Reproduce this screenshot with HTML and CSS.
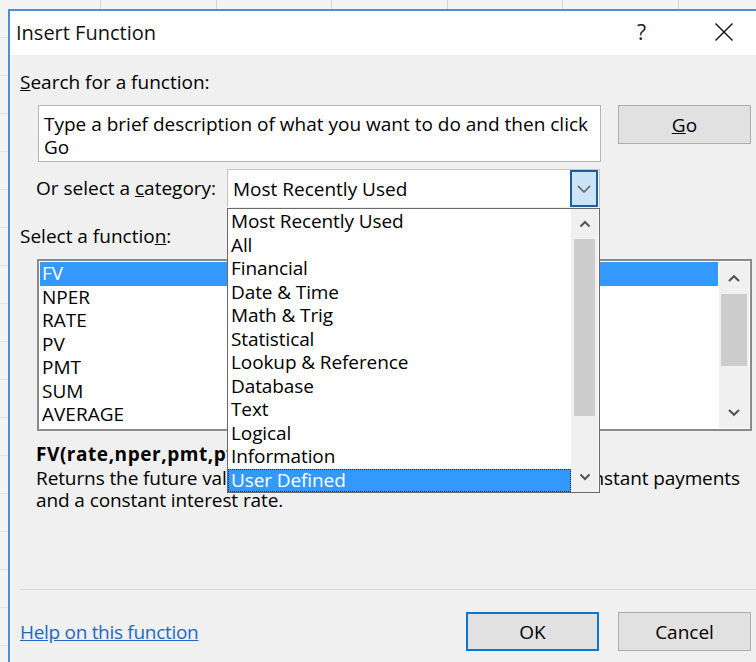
FILE: index.html
```html
<!DOCTYPE html>
<html lang="en">
<head>
<meta charset="utf-8">
<title>Insert Function</title>
<link rel="stylesheet" href="styles.css">
</head>
<body>
<div class="sheet-strip">
  <span class="cell"></span><span class="cell"></span><span class="cell"></span><span class="cell"></span><span class="cell"></span><span class="cell"></span>
</div>
<div class="dialog">
  <div class="titlebar">
    <span class="title">Insert Function</span>
    <span class="help-btn">?</span>
    <span class="close-btn">
      <svg width="20" height="20" viewBox="0 0 20 20"><path d="M1.5 1.5 L18.5 18.5 M18.5 1.5 L1.5 18.5" stroke="#1a1a1a" stroke-width="1.5" fill="none"/></svg>
    </span>
  </div>

  <div class="content">
    <div class="label search-label"><u>S</u>earch for a function:</div>
    <div class="search-row">
      <div class="search-box">Type a brief description of what you want to do and then click Go</div>
      <button class="btn go-btn"><u>G</u>o</button>
    </div>

    <div class="category-row">
      <div class="label category-label">Or select a <u>c</u>ategory:</div>
      <div class="combo">
        <span class="combo-value">Most Recently Used</span>
        <span class="combo-btn">
          <svg width="14" height="8" viewBox="0 0 14 8"><path d="M1 1 L7 7 L13 1" stroke="#5a5a5a" stroke-width="1.5" fill="none"/></svg>
        </span>
        <div class="dropdown">
          <ul class="dropdown-items">
            <li>Most Recently Used</li>
            <li>All</li>
            <li>Financial</li>
            <li>Date &amp; Time</li>
            <li>Math &amp; Trig</li>
            <li>Statistical</li>
            <li>Lookup &amp; Reference</li>
            <li>Database</li>
            <li>Text</li>
            <li>Logical</li>
            <li>Information</li>
            <li class="selected">User Defined</li>
          </ul>
          <div class="scrollbar dd-scroll">
            <span class="arrow">
              <svg width="12" height="8" viewBox="0 0 12 8"><path d="M1.5 6.5 L6 2 L10.5 6.5" stroke="#555" stroke-width="2" fill="none"/></svg>
            </span>
            <span class="thumb dd-thumb"></span>
            <span class="track"></span>
            <span class="arrow">
              <svg width="12" height="8" viewBox="0 0 12 8"><path d="M1.5 1.5 L6 6 L10.5 1.5" stroke="#555" stroke-width="2" fill="none"/></svg>
            </span>
          </div>
        </div>
      </div>
    </div>

    <div class="label function-label">Select a functio<u>n</u>:</div>
    <div class="listbox">
      <ul class="fn-items">
        <li class="selected">FV</li>
        <li>NPER</li>
        <li>RATE</li>
        <li>PV</li>
        <li>PMT</li>
        <li>SUM</li>
        <li>AVERAGE</li>
      </ul>
      <div class="scrollbar fn-scroll">
        <span class="arrow">
          <svg width="14" height="9" viewBox="0 0 14 9"><path d="M2 7 L7 2.2 L12 7" stroke="#555" stroke-width="2.2" fill="none"/></svg>
        </span>
        <span class="thumb fn-thumb"></span>
        <span class="track"></span>
        <span class="arrow">
          <svg width="14" height="9" viewBox="0 0 14 9"><path d="M2 2 L7 6.8 L12 2" stroke="#555" stroke-width="2.2" fill="none"/></svg>
        </span>
      </div>
    </div>

    <div class="signature">FV(rate,nper,pmt,pv,type)</div>
    <div class="description">Returns the future value of an investment based on periodic, constant payments and a constant interest rate.</div>

    <div class="separator"></div>

    <div class="footer">
      <a class="help-link" href="#">Help on this function</a>
      <button class="btn ok-btn">OK</button>
      <button class="btn cancel-btn">Cancel</button>
    </div>
  </div>
</div>
</body>
</html>
```

FILE: styles.css
```css
html, body {
  margin: 0;
  padding: 0;
}

body {
  width: 756px;
  height: 662px;
  overflow: hidden;
  background-color: #f4f4f4;
  /* worksheet row lines peeking out at the left edge */
  background-image: repeating-linear-gradient(to bottom, transparent 0, transparent 37px, #e2e2e2 37px, #e2e2e2 38px);
  font-family: "Open Sans", "Noto Sans", sans-serif;
  font-size: 19px;
  color: #000;
}

/* column headers of the worksheet behind the dialog */
.sheet-strip {
  display: flex;
  height: 9px;
  padding-left: 100px;
  background: #f4f4f4;
  overflow: hidden;
}

.sheet-strip .cell {
  flex: 0 0 115.6px;
  border-left: 1px solid #d6d6d6;
  box-sizing: border-box;
}

.dialog {
  margin-left: 8px;
  width: 748px;
  height: 653px;
  border-top: 2px solid #4b8fd6;
  border-left: 2px solid #4b8fd6;
  background: #f0f0f0;
  box-sizing: border-box;
}

.titlebar {
  display: flex;
  align-items: center;
  height: 44px;
  background: #fff;
  padding-left: 6px;
}

.title {
  font-size: 20px;
  flex: 1;
  color: #111;
  margin-top: -2px;
}

.help-btn {
  font-size: 21px;
  color: #222;
  margin-right: 68px;
  margin-top: -2px;
}

.close-btn {
  display: flex;
  margin-right: 22px;
  margin-top: -2px;
}

.content {
  padding: 0 5px 0 10px;
  position: relative;
}

.label {
  line-height: 24px;
  white-space: nowrap;
}

.search-label {
  margin-top: 15px;
}

.search-row {
  display: flex;
  align-items: flex-start;
  margin-top: 11px;
}

.search-box {
  margin-left: 18px;
  width: 563px;
  height: 57px;
  box-sizing: border-box;
  border: 1px solid #b4b4b4;
  background: #fff;
  padding: 7px 10px 0 5px;
  line-height: 23px;
}

.btn {
  font-family: inherit;
  font-size: 19px;
  color: #000;
  width: 133px;
  height: 39px;
  background: #e1e1e1;
  border: 1px solid #adadad;
  padding: 0;
  box-sizing: border-box;
}

.go-btn {
  margin-left: 17px;
}

.category-row {
  display: flex;
  align-items: center;
  margin-top: 7px;
}

.category-label {
  margin-left: 16px;
  width: 191px;
}

.combo {
  position: relative;
  display: flex;
  align-items: center;
  width: 373px;
  height: 38px;
  box-sizing: border-box;
  border: 1px solid #c4c4c4;
  border-bottom: none;
  background: #fff;
}

.combo-value {
  flex: 1;
  padding-left: 5px;
}

.combo-btn {
  display: flex;
  align-items: center;
  justify-content: center;
  width: 28px;
  height: 37px;
  box-sizing: border-box;
  margin-right: 1px;
  background: #cce4f7;
  border: 2px solid #1d5f9e;
}

.dropdown {
  position: absolute;
  left: -1px;
  top: 38px;
  width: 373px;
  height: 285px;
  box-sizing: border-box;
  border: 1px solid #6a6a6a;
  background: #fff;
  display: flex;
  z-index: 2;
}

.dropdown-items,
.fn-items {
  list-style: none;
  margin: 0;
  padding: 0;
  flex: 1;
}

.dropdown-items {
  padding-top: 1px;
}

.dropdown-items li {
  height: 23.5px;
  line-height: 23.5px;
  padding-left: 3px;
  white-space: nowrap;
  letter-spacing: -0.1px;
}

.dropdown-items li.selected {
  background: #3399ff;
  color: #fff;
  outline: 1px dotted #2b2b2b;
  outline-offset: -1px;
}

.scrollbar {
  display: flex;
  flex-direction: column;
  align-items: center;
  background: #f0f0f0;
}

.scrollbar .arrow {
  display: flex;
  align-items: center;
  justify-content: center;
  width: 100%;
}

.scrollbar .thumb {
  background: #cdcdcd;
}

.scrollbar .track {
  flex: 1;
}

.dd-scroll {
  width: 27px;
  margin-right: 1px;
}

.dd-scroll .arrow {
  height: 30px;
}

.dd-thumb {
  width: 21px;
  height: 177px;
}

.listbox {
  display: flex;
  margin-top: 11px;
  margin-left: 17px;
  width: 715px;
  height: 172px;
  box-sizing: border-box;
  border: 2px solid #8a8a8a;
  background: #fff;
  padding: 1px;
}

.fn-items li {
  height: 23.5px;
  line-height: 23.5px;
  padding-left: 2px;
}

.fn-items li.selected {
  background: #3399ff;
  color: #fff;
}

.fn-scroll {
  width: 30px;
  margin-left: 1px;
}

.fn-scroll .arrow {
  height: 32px;
}

.fn-thumb {
  width: 26px;
  height: 72px;
}

.function-label {
  margin-top: 17px;
}

.signature {
  margin-top: 11px;
  margin-left: 16px;
  font-weight: bold;
  line-height: 24px;
  letter-spacing: 0.55px;
}

.description {
  margin-left: 16px;
  margin-top: 1px;
  line-height: 22px;
  width: 716px;
  letter-spacing: -0.1px;
}

.separator {
  margin-top: 78px;
  height: 1px;
  background: #dadada;
  margin-right: -5px;
}

.footer {
  display: flex;
  align-items: center;
  margin-top: 22px;
}

.help-link {
  flex: 1;
  color: #1e68c8;
  text-decoration: underline;
  letter-spacing: -0.3px;
}

.ok-btn {
  border: 2px solid #0078d7;
}

.cancel-btn {
  margin-left: 19px;
}
```
